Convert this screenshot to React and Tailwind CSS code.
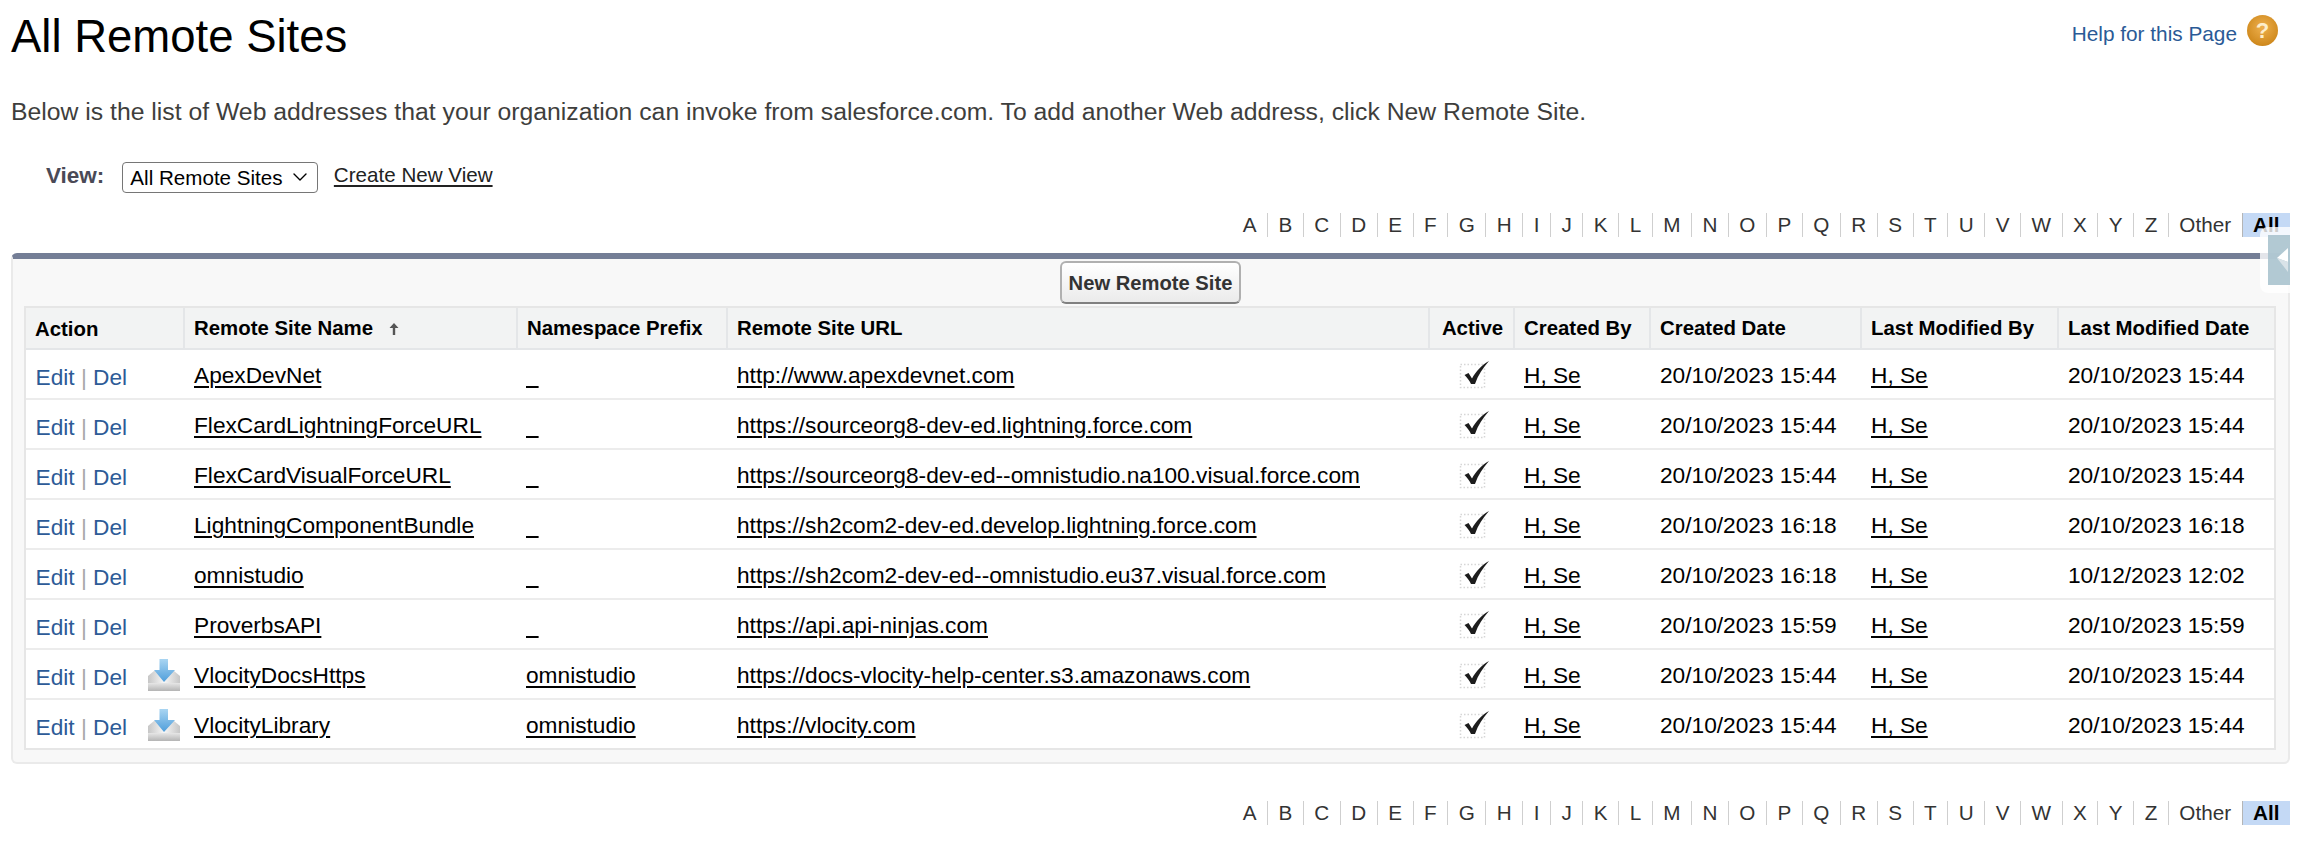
import React from 'react';
import { ChevronDown } from 'lucide-react';

const LETTERS = 'A B C D E F G H I J K L M N O P Q R S T U V W X Y Z Other'.split(' ');

const SITES = [
  { name: 'ApexDevNet', url: 'http://www.apexdevnet.com', created: '20/10/2023 15:44', modified: '20/10/2023 15:44' },
  { name: 'FlexCardLightningForceURL', url: 'https://sourceorg8-dev-ed.lightning.force.com', created: '20/10/2023 15:44', modified: '20/10/2023 15:44' },
  { name: 'FlexCardVisualForceURL', url: 'https://sourceorg8-dev-ed--omnistudio.na100.visual.force.com', created: '20/10/2023 15:44', modified: '20/10/2023 15:44' },
  { name: 'LightningComponentBundle', url: 'https://sh2com2-dev-ed.develop.lightning.force.com', created: '20/10/2023 16:18', modified: '20/10/2023 16:18' },
  { name: 'omnistudio', url: 'https://sh2com2-dev-ed--omnistudio.eu37.visual.force.com', created: '20/10/2023 16:18', modified: '10/12/2023 12:02' },
  { name: 'ProverbsAPI', url: 'https://api.api-ninjas.com', created: '20/10/2023 15:59', modified: '20/10/2023 15:59' },
  { name: 'VlocityDocsHttps', ns: 'omnistudio', managed: true, url: 'https://docs-vlocity-help-center.s3.amazonaws.com', created: '20/10/2023 15:44', modified: '20/10/2023 15:44' },
  { name: 'VlocityLibrary', ns: 'omnistudio', managed: true, url: 'https://vlocity.com', created: '20/10/2023 15:44', modified: '20/10/2023 15:44' },
];

const AlphaBar = ({ className }) => (
  <div className={`flex justify-end h-6 text-[20.7px] leading-6 text-[#333] ${className}`}>
    {LETTERS.map((l) => (
      <span key={l} className={`px-[10.5px] ${l === 'Other' ? '' : 'border-r-[1.5px] border-[#cfcfcf]'}`}>{l}</span>
    ))}
    <span className="px-[10.5px] font-bold text-black bg-[#c4d9f5] border-l-[1.5px] border-[#b5b5b5]">All</span>
  </div>
);

const Link = ({ children }) => (
  <a className="text-black underline decoration-2 underline-offset-[3px]">{children}</a>
);

const ManagedIcon = () => (
  <svg width="32" height="32" viewBox="0 0 32 32" className="block">
    <defs>
      <linearGradient id="tray" x1="0" y1="0" x2="1" y2="0">
        <stop offset="0" stopColor="#c6c6c6" />
        <stop offset="0.5" stopColor="#f6f6f6" />
        <stop offset="1" stopColor="#c6c6c6" />
      </linearGradient>
      <linearGradient id="lip" x1="0" y1="0" x2="0" y2="1">
        <stop offset="0" stopColor="#e6e6e6" />
        <stop offset="1" stopColor="#b4b4b4" />
      </linearGradient>
      <linearGradient id="arrow" x1="0" y1="0" x2="0" y2="1">
        <stop offset="0" stopColor="#a9d5f2" />
        <stop offset="1" stopColor="#4f9edb" />
      </linearGradient>
    </defs>
    <path d="M0 17l6-5h20l6 5v15H0z" fill="url(#tray)" />
    <rect y="24" width="32" height="8" fill="url(#lip)" />
    <path d="M11.500 0H20v11h7L16 23 6 11h5.500z" fill="url(#arrow)" />
  </svg>
);

const CheckIcon = () => (
  <svg width="32" height="30" viewBox="0 0 32 30" className="block">
    <rect x="1.500" y="4.500" width="24" height="23" fill="none" stroke="#d6d6d6" strokeWidth="1.500" strokeDasharray="1.500 2" />
    <path d="M5.500 15L9.500 13l3.500 5.500C17 11 23 5 30 1c-6 7-11 14-14 23h-4c-1.500-3.500-4-6.500-6.500-9z" fill="#1c1c1c" className="blur-[0.4px]" />
  </svg>
);

const Th = ({ children, first, center }) => (
  <th className={`h-[42px] pt-[2px] border-b-2 border-[#e4e6e8] bg-[#f2f3f3] text-[20.4px] font-bold text-black align-middle ${first ? '' : 'border-l-2'} ${center ? 'text-center pl-[2px]' : 'text-left pl-[9px]'}`}>
    {children}
  </th>
);

const Td = ({ last, className = 'pl-[11px]', children }) => (
  <td className={`pt-[3px] align-middle ${last ? 'h-[48px]' : 'h-[50px] border-b-2 border-[#ececec]'} ${className}`}>
    {children}
  </td>
);

const App = () => {
  return (
    <div className="relative w-[2290px] h-[866px] overflow-hidden pl-[11px] bg-white font-['Liberation_Sans',Arial,sans-serif] text-black">
      {/* Title + help */}
      <div className="flex justify-between items-start pt-[14px]">
        <h1 className="text-[45.5px] leading-none font-normal">All Remote Sites</h1>
        <div className="flex items-center -mt-[2px] mr-[12px]">
          <a className="text-[20.8px] text-[#2a5a96] mt-[6px]">Help for this Page</a>
          <span className="ml-[10px] flex items-center justify-center w-[31px] h-[31px] rounded-full bg-[radial-gradient(circle_at_50%_40%,#eeb04e,#d08a1e_72%,#a86c14)] text-[#fdeecb] font-bold text-[22px] leading-none">?</span>
        </div>
      </div>

      <p className="mt-[37px] text-[24.76px] leading-[30px] text-[#3e3e3c]">
        Below is the list of Web addresses that your organization can invoke from salesforce.com. To add another Web address, click New Remote Site.
      </p>

      {/* View picker */}
      <div className="flex items-center h-[31px] mt-[35px] pl-[35px]">
        <span className="text-[22.5px] font-bold text-[#4a4a56] -mt-[2px]">View:</span>
        <div className="relative ml-[17.5px]">
          <select className="appearance-none block w-[196px] h-[31px] pl-[7.5px] border-[1.5px] border-[#767676] rounded-[4px] bg-white text-[20.6px] text-black">
            <option>All Remote Sites</option>
          </select>
          <ChevronDown size={24} strokeWidth={1.4} className="absolute right-[6px] top-[3px] text-black pointer-events-none" />
        </div>
        <a className="ml-[16px] text-[20.6px] text-[#222] underline underline-offset-[3px] -mt-[3px]">Create New View</a>
      </div>

      <AlphaBar className="mt-[20px]" />

      {/* Panel */}
      <div className="mt-[16px] h-[511px] border-2 border-t-[6px] border-[#eaeaea] border-t-[#747e96] rounded-[6px] bg-[#f8f8f8] px-[11px]">
        <div className="flex justify-center pt-[2px] h-[47px]">
          <button className="w-[181px] h-[43px] pt-[2px] rounded-[6px] border-2 border-[#b0b0b0] border-b-[#808080] bg-gradient-to-b from-white to-[#ebebeb] text-[20.2px] font-bold text-[#333]">
            New Remote Site
          </button>
        </div>
        <table className="w-[2252px] table-fixed border-separate border-spacing-0 border-2 border-[#e6e6e6] bg-white text-[22.7px]">
          <colgroup>
            <col className="w-[157px]" />
            <col className="w-[333px]" />
            <col className="w-[210px]" />
            <col className="w-[702px]" />
            <col className="w-[85px]" />
            <col className="w-[136px]" />
            <col className="w-[211px]" />
            <col className="w-[197px]" />
            <col className="w-[217px]" />
          </colgroup>
          <thead>
            <tr>
              <Th first><span className="inline-block pt-[2px]">Action</span></Th>
              <Th>
                Remote Site Name
                <svg width="12" height="12" viewBox="0 0 12 12" className="inline-block ml-[15px] -mt-[2px]">
                  <path d="M6 0l4.500 5H7.200v7H4.800V5H1.500z" fill="#555" />
                </svg>
              </Th>
              <Th>Namespace Prefix</Th>
              <Th>Remote Site URL</Th>
              <Th center>Active</Th>
              <Th>Created By</Th>
              <Th>Created Date</Th>
              <Th>Last Modified By</Th>
              <Th>Last Modified Date</Th>
            </tr>
          </thead>
          <tbody>
            {SITES.map((s, i) => {
              const last = i === SITES.length - 1;
              return (
                <tr key={s.name}>
                  <Td last={last} className="pl-[9.5px]">
                    <div className="flex items-center">
                      <span className="pt-[5px] text-[#2d5b97] whitespace-nowrap">Edit <span className="text-[#a8a8a8]">|</span> Del</span>
                      {s.managed && <span className="ml-[20.5px]"><ManagedIcon /></span>}
                    </div>
                  </Td>
                  <Td last={last}><Link>{s.name}</Link></Td>
                  <Td last={last} className="pl-[10px]"><Link>{s.ns || '\u00a0\u00a0'}</Link></Td>
                  <Td last={last}><Link>{s.url}</Link></Td>
                  <Td last={last} className="pl-[31px]"><CheckIcon /></Td>
                  <Td last={last}><Link>H, Se</Link></Td>
                  <Td last={last}>{s.created}</Td>
                  <Td last={last}><Link>H, Se</Link></Td>
                  <Td last={last}>{s.modified}</Td>
                </tr>
              );
            })}
          </tbody>
        </table>
      </div>

      <AlphaBar className="mt-[37px]" />

      {/* Collapsed side tab, lies over the list corner */}
      <div className="absolute right-0 top-[227px] w-[30px] h-[66px] rounded-l-[8px] bg-white/80 pl-[8px] pt-[8px]">
        <svg width="22" height="50" viewBox="0 0 22 50" className="block">
          <rect width="22" height="50" fill="#a7c1cd" fillOpacity="0.88" />
          <path d="M20 13L9 23l11 4z" fill="#ffffff" />
          <path d="M9 23l11 4v10z" fill="#d9e3e8" />
        </svg>
      </div>
    </div>
  );
};

export default App;
